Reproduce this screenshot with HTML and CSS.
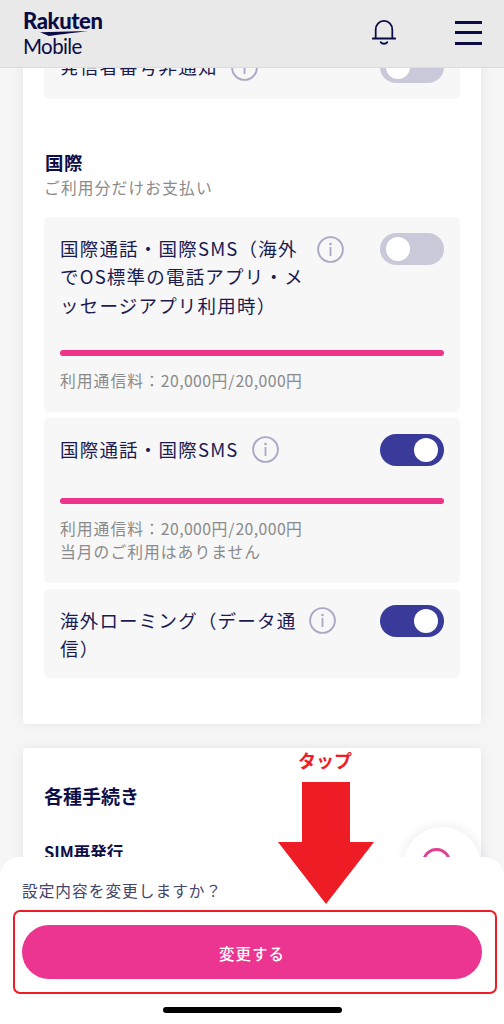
FILE: index.html
```html
<!DOCTYPE html>
<html lang="ja">
<head>
<meta charset="utf-8">
<title>Rakuten Mobile</title>
<link rel="stylesheet" href="styles.css">
</head>
<body>
<div class="page">
  <header class="header">
    <div class="logo">
      <span class="logo-top">Rakuten</span>
      <svg class="swoosh" viewBox="0 0 48 5" width="48" height="5"><path d="M0 1.2 L48 0 C36 1.6 24 3 9 5 Z" fill="#0b0b45"/></svg>
      <span class="logo-bottom">Mobile</span>
    </div>
    <div class="header-icons">
      <svg class="bell" viewBox="0 0 26 28" width="24" height="27" fill="none" stroke="#0b0b45" stroke-width="1.9"><path d="M4 20 V11 C4 5.500 8 1.500 13 1.500 S22 5.500 22 11 V20"/><path d="M1 20.500 H25" stroke-width="2.300" stroke-linecap="round"/><path d="M9.500 24.500 C11 26.800 15 26.800 16.500 24.500" stroke-width="2.100" stroke-linecap="round"/></svg>
      <div class="burger"><span></span><span></span><span></span></div>
    </div>
  </header>

  <main class="main">
    <section class="card card-intl">
      <div class="row row-first">
        <div class="row-head">
          <div class="label-wrap">
            <div class="label">発信者番号非通知</div>
            <svg class="info" viewBox="0 0 27 27" width="27" height="27"><use href="#i-info"/></svg>
          </div>
          <div class="toggle"><span class="knob"></span></div>
        </div>
      </div>

      <h2 class="sec-title">国際</h2>
      <p class="sec-sub">ご利用分だけお支払い</p>

      <div class="row">
        <div class="row-head">
          <div class="label-wrap">
            <div class="label">国際通話・国際SMS（海外<br>でOS標準の電話アプリ・メ<br>ッセージアプリ利用時）</div>
            <svg class="info" viewBox="0 0 27 27" width="27" height="27"><use href="#i-info"/></svg>
          </div>
          <div class="toggle"><span class="knob"></span></div>
        </div>
        <div class="bar"></div>
        <p class="usage">利用通信料：<span class="num">20,000</span>円/<span class="num">20,000</span>円</p>
      </div>

      <div class="row">
        <div class="row-head">
          <div class="label-wrap">
            <div class="label">国際通話・国際SMS</div>
            <svg class="info" viewBox="0 0 27 27" width="27" height="27"><use href="#i-info"/></svg>
          </div>
          <div class="toggle on"><span class="knob"></span></div>
        </div>
        <div class="bar"></div>
        <p class="usage">利用通信料：<span class="num">20,000</span>円/<span class="num">20,000</span>円<br>当月のご利用はありません</p>
      </div>

      <div class="row">
        <div class="row-head">
          <div class="label-wrap">
            <div class="label">海外ローミング（データ通<br>信）</div>
            <svg class="info" viewBox="0 0 27 27" width="27" height="27"><use href="#i-info"/></svg>
          </div>
          <div class="toggle on"><span class="knob"></span></div>
        </div>
      </div>
    </section>

    <section class="card card-proc">
      <h2 class="proc-title">各種手続き</h2>
      <h3 class="proc-item">SIM再発行</h3>
    </section>
  </main>

  <div class="fab"><span class="fab-ring"></span></div>

  <div class="sheet">
    <p class="sheet-text">設定内容を変更しますか？</p>
    <button class="cta">変更する</button>
    <div class="home"></div>
  </div>

  <div class="tap-frame"></div>
  <div class="tap-label">タップ</div>
  <svg class="tap-arrow" viewBox="0 0 96 122" width="96" height="122"><path d="M24 0 H72 V60 H96 L48 122 L0 60 H24 Z" fill="#ee1c25"/></svg>

  <svg class="defs" width="0" height="0"><defs><g id="i-info"><circle cx="13.500" cy="13.500" r="12.400" fill="none" stroke="#a9a9c6" stroke-width="1.900"/><circle cx="13.500" cy="8" r="1.300" fill="#a9a9c6"/><rect x="12.600" y="11" width="1.800" height="9" fill="#a9a9c6"/></g></defs></svg>
</div>
</body>
</html>
```
FILE: styles.css
```css
* { box-sizing: border-box; }
html, body { margin: 0; padding: 0; }
body { font-family: "Noto Sans CJK JP", "Noto Sans", sans-serif; color: #1b1b52; }
.page { position: relative; width: 504px; height: 1024px; overflow: hidden; background: #f6f6f6; }

.header {
  position: absolute; left: 0; top: 0; z-index: 5; width: 100%; height: 68px;
  background: #e9e9e9; border-bottom: 1px solid #dcdcdc;
  display: flex; justify-content: space-between; align-items: flex-start;
}
.logo { display: flex; flex-direction: column; margin: 11px 0 0 24px; color: #0b0b45; width: 90px; }
.logo-top { font-family: "Lato", sans-serif; font-weight: 900; font-size: 22px; line-height: 20px; letter-spacing: -0.4px; margin-left: -1px; }
.swoosh { margin: 0 0 0 16px; display: block; }
.logo-bottom { font-family: "Lato", sans-serif; font-weight: 400; font-size: 20.500px; line-height: 20px; letter-spacing: -0.6px; margin-left: -1px; }
.header-icons { display: flex; align-items: flex-start; margin: 19px 22px 0 0; gap: 59px; }
.burger { display: flex; flex-direction: column; gap: 7.400px; width: 27px; margin-top: 2px; }
.burger span { display: block; height: 3px; background: #0b0b45; }

.main { padding: 0 23px; display: flex; flex-direction: column; gap: 24px; }
.card { background: #fff; border-radius: 4px; box-shadow: 0 0 14px rgba(30, 30, 80, .07); padding: 35px 21px 46.400px; }
.card-intl { display: flex; flex-direction: column; }

.row { background: #f7f7f8; border-radius: 5px; padding: 16px 16px 19.300px; margin-bottom: 6px; }
.row:last-child { margin-bottom: 0; padding-bottom: 16px; }
.row-first { margin-bottom: 0; padding-bottom: 16px; height: 64px; }
.row-head { display: flex; justify-content: space-between; align-items: flex-start; }
.label-wrap { display: flex; align-items: flex-start; gap: 13px; }
.label { font-size: 18.500px; line-height: 28.300px; letter-spacing: 1.200px; margin: 1px 0 -1px; white-space: nowrap; }
.info { display: block; margin-top: 2.500px; flex: none; }
.toggle { flex: none; width: 64px; height: 32px; border-radius: 16px; background: #c9c9d9; padding: 4px 6px; display: flex; }
.toggle.on { background: #3a3a9a; justify-content: flex-end; }
.knob { display: block; width: 24px; height: 24px; border-radius: 50%; background: #fff; }
.bar { height: 6px; border-radius: 3px; background: #ee338b; margin-top: 32px; }
.usage { margin: 13px 0 0; font-size: 15.800px; line-height: 23.500px; letter-spacing: 1px; color: #8a8a8a; }
.num { letter-spacing: .4px; }

.sec-title { margin: 50px 0 0; font-size: 18.500px; line-height: 26px; font-weight: 700; letter-spacing: .5px; color: #0e0e48; padding-left: 1px; }
.sec-sub { margin: 1px 0 17px; font-size: 15.700px; line-height: 24px; letter-spacing: 1.200px; color: #8a8a8a; }

.card-proc { padding: 32px 21px 0; height: 300px; }
.proc-title { margin: 0; font-size: 19px; line-height: 32px; font-weight: 700; color: #0e0e48; }
.proc-item { margin: 28px 0 0; font-size: 16.500px; line-height: 24px; font-weight: 700; color: #0e0e48; }

.fab { position: absolute; left: 403px; top: 827px; width: 78px; height: 78px; border-radius: 50%; background: #fff; box-shadow: 0 0 12px rgba(30, 30, 80, .1); padding: 21px 0 0 19px; }
.fab-ring { display: block; width: 29px; height: 29px; border-radius: 50%; border: 3px solid #e0408f; }

.sheet { position: absolute; left: 0; top: 857px; width: 504px; height: 167px; background: #fff; border-radius: 20px 20px 0 0; padding: 22px 22px 0; display: flex; flex-direction: column; }
.sheet-text { margin: 0; font-size: 15.700px; line-height: 24px; letter-spacing: 1px; color: #45456b; }
.cta { margin-top: 22px; width: 460px; height: 54px; border: 0; border-radius: 27px; background: #ec3590; color: #fff; font: 500 15.500px/54px "Noto Sans CJK JP", sans-serif; letter-spacing: 1px; }
.home { align-self: center; margin: 28px 0 0 0; width: 179px; height: 6px; border-radius: 3px; background: #000; }

.tap-frame { position: absolute; left: 12.500px; top: 910px; width: 484px; height: 84px; border: 2px solid #ee1c25; border-radius: 7px; }
.tap-label { position: absolute; left: 298px; top: 748px; font-size: 18px; line-height: 24px; font-weight: 700; color: #ee1c25; letter-spacing: 0; }
.tap-arrow { position: absolute; left: 278px; top: 782px; display: block; }
.defs { position: absolute; }
```
